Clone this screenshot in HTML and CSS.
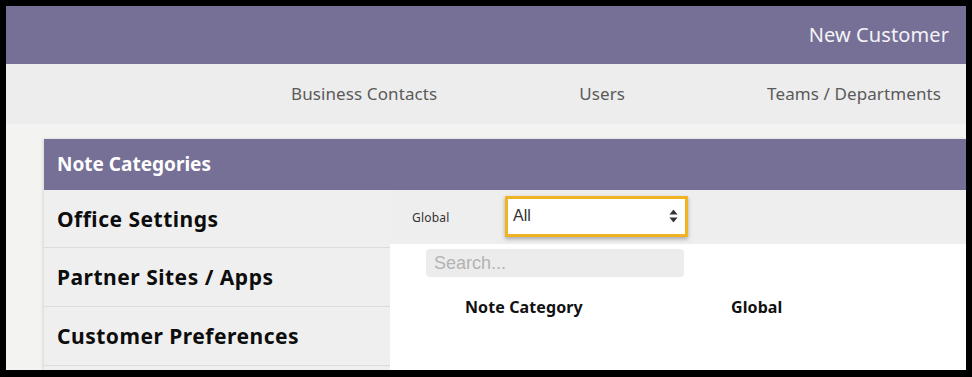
FILE: index.html
```html
<!DOCTYPE html>
<html>
<head>
<meta charset="utf-8">
<link rel="stylesheet" href="styles.css">
</head>
<body>
<div class="frame">
  <header class="topbar"><span class="title">New Customer</span></header>
  <nav class="tabs">
    <span class="tab">Business Contacts</span>
    <span class="tab">Users</span>
    <span class="tab">Teams / Departments</span>
  </nav>
  <main class="main">
    <section class="panel">
      <div class="panel-head">Note Categories</div>
      <div class="panel-body">
        <aside class="side">
          <div class="side-item">Office Settings</div>
          <div class="side-item">Partner Sites / Apps</div>
          <div class="side-item">Customer Preferences</div>
        </aside>
        <div class="content">
          <div class="filter">
            <span class="filter-label">Global</span>
            <div class="select">
              <span class="select-val">All</span>
              <svg class="arrows" width="9" height="14" viewBox="0 0 9 14"><path d="M4.5 0.5 L8.5 5.5 H0.5 Z" fill="#333"/><path d="M4.5 13.5 L8.5 8.5 H0.5 Z" fill="#333"/></svg>
            </div>
          </div>
          <div class="search">Search...</div>
          <div class="cols">
            <span class="col col-name">Note Category</span>
            <span class="col col-global">Global</span>
          </div>
        </div>
      </div>
    </section>
  </main>
</div>
</body>
</html>
```

FILE: styles.css
```css
html, body {
  margin: 0;
  padding: 0;
  background: #000;
  height: 100%;
  overflow: hidden;
}
.frame {
  margin: 6px 6px 0 6px;
  height: 364px;
  background: #f3f3f2;
  overflow: hidden;
  display: flex;
  flex-direction: column;
  font-family: "Noto Sans", "Open Sans", sans-serif;
}
.topbar {
  height: 58px;
  flex: none;
  background: #767096;
  display: flex;
  align-items: center;
  justify-content: flex-end;
  padding-right: 17px;
}
.title {
  color: #f4f3f8;
  font-size: 20px;
  letter-spacing: 0.1px;
  margin-top: -2px;
}
.tabs {
  height: 60px;
  flex: none;
  background: #ededed;
  display: flex;
  align-items: center;
  justify-content: flex-end;
  gap: 142px;
  padding-right: 25px;
}
.tab {
  color: #5a5a5a;
  font-size: 17px;
  letter-spacing: 0.1px;
  margin-top: -2px;
}
.main {
  flex: 1;
  padding: 15px 0 0 38px;
  min-height: 0;
}
.panel {
  height: 100%;
  display: flex;
  flex-direction: column;
  box-shadow: -1px 0 3px rgba(0,0,0,0.12);
}
.panel-head {
  height: 51px;
  flex: none;
  background: #767096;
  color: #fff;
  font-weight: 700;
  font-size: 19px;
  display: flex;
  align-items: center;
  padding-left: 13px;
  letter-spacing: 0px;
  box-sizing: border-box;
  padding-bottom: 2px;
}
.panel-body {
  flex: 1;
  display: flex;
  min-height: 0;
}
.side {
  width: 346px;
  flex: none;
  background: #efefef;
}
.side-item {
  height: 57px;
  border-bottom: 1px solid #dcdcdc;
  display: flex;
  align-items: center;
  padding-left: 13px;
  font-weight: 700;
  font-size: 21px;
  color: #0d0d0d;
  letter-spacing: 0.5px;
}
.side-item + .side-item {
  height: 58px;
}
.content {
  flex: 1;
  background: #fff;
}
.filter {
  height: 54px;
  background: #eeeeee;
  display: flex;
  align-items: center;
  padding-left: 22px;
}
.filter-label {
  font-size: 12px;
  color: #333;
  width: 93px;
  letter-spacing: 0.2px;
}
.select {
  width: 165px;
  height: 35px;
  border: 3px solid #f0b323;
  background: #fff;
  box-shadow: 0 2px 4px rgba(0,0,0,0.3);
  display: flex;
  align-items: center;
  justify-content: space-between;
  padding: 0 7px 0 5px;
  box-sizing: content-box;
  margin-top: -2px;
}
.select-val {
  font-family: "Liberation Sans", Arial, sans-serif;
  font-size: 16px;
  color: #333;
}
.arrows {
  display: block;
}
.search {
  margin: 5px 0 0 36px;
  width: 250px;
  height: 28px;
  padding-left: 8px;
  background: #ececec;
  border-radius: 4px;
  font-family: "Liberation Sans", Arial, sans-serif;
  font-size: 18px;
  color: #b3b3b3;
  display: flex;
  align-items: center;
}
.cols {
  display: flex;
  margin-top: 19px;
  padding-left: 75px;
}
.col {
  font-weight: 700;
  font-size: 16px;
  color: #111;
  letter-spacing: 0.1px;
}
.col-name {
  width: 266px;
}
```
